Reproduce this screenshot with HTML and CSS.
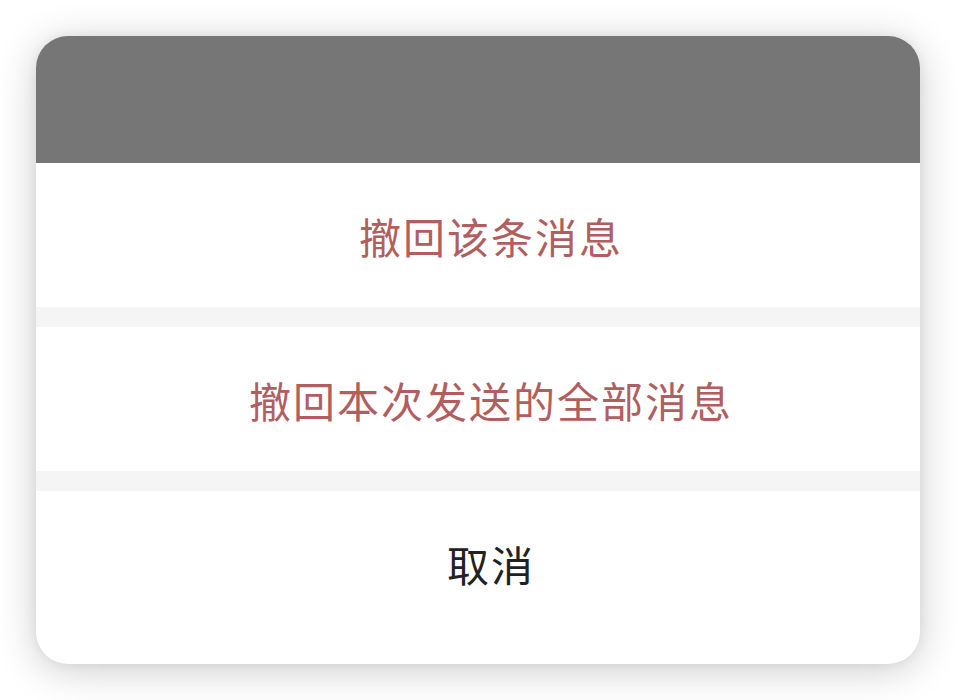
FILE: index.html
```html
<!DOCTYPE html>
<html lang="zh-CN">
<head>
<meta charset="utf-8">
<title>撤回消息</title>
<link rel="stylesheet" href="styles.css">
</head>
<body>
<div class="sheet">
  <div class="sheet-header"></div>
  <div class="sheet-item danger">撤回该条消息</div>
  <div class="sheet-gap"></div>
  <div class="sheet-item danger">撤回本次发送的全部消息</div>
  <div class="sheet-gap"></div>
  <div class="sheet-item cancel">取消</div>
</div>
</body>
</html>
```
FILE: styles.css
```css
html, body {
  margin: 0;
  padding: 0;
  background: #ffffff;
}
body {
  width: 956px;
  height: 700px;
  padding: 36px;
  box-sizing: border-box;
  font-family: "Noto Sans CJK SC", "Noto Sans", sans-serif;
}
.sheet {
  width: 884px;
  height: 628px;
  border-radius: 32px;
  overflow: hidden;
  background: #ffffff;
  box-shadow: 0 6px 40px rgba(0, 0, 0, 0.2), 0 0 12px rgba(0, 0, 0, 0.06);
  display: flex;
  flex-direction: column;
}
.sheet-header {
  height: 127px;
  background: #767676;
  flex: none;
}
.sheet-item {
  flex: none;
  height: 144px;
  display: flex;
  align-items: center;
  justify-content: center;
  font-size: 42px;
  letter-spacing: 2px;
  padding-left: 26px;
  box-sizing: border-box;
}
.danger {
  color: #b25e5e;
}
.cancel {
  color: #222222;
  height: 172px;
  padding-bottom: 28px;
}
.sheet-gap {
  flex: none;
  height: 20px;
  background: #f5f5f5;
}
```
